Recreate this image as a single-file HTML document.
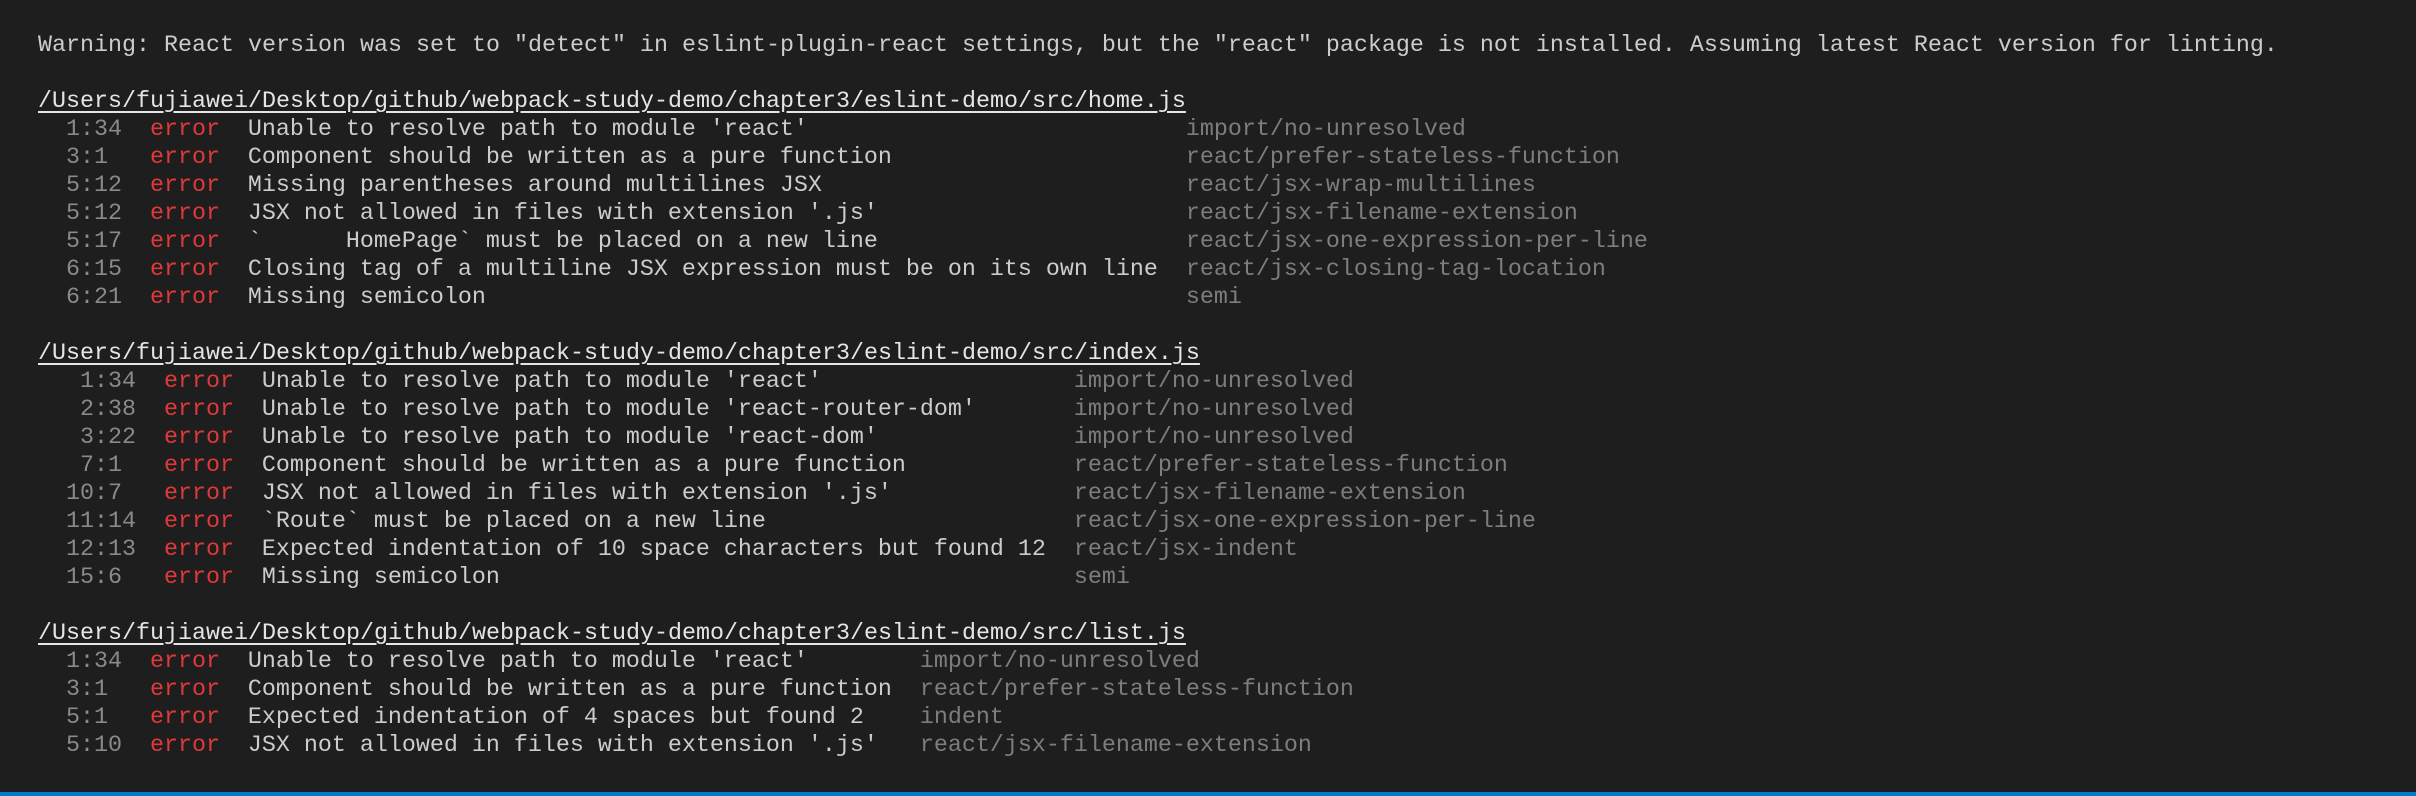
<!DOCTYPE html>
<html><head><meta charset="utf-8"><style>
html,body{margin:0;padding:0;background:#1e1e1e;}
body{width:2416px;height:796px;overflow:hidden;position:relative;}
.t{margin:0;position:absolute;left:38px;top:32px;font-family:"Liberation Mono",monospace;font-size:23.33px;line-height:28px;color:#cccccc;white-space:normal;}
.t div{height:28px;white-space:pre}
.u{text-decoration:underline;text-underline-offset:4px;color:#e5e5e5}
span{display:inline-block;white-space:pre}
.p{color:#8a8a8a;margin-left:2ch;text-align:right}
.p4{width:4ch}.p5{width:5ch}
.e{color:#e0393a;margin-left:2ch;width:5ch}
.m{margin-left:2ch}
.m65{width:65ch}.m56{width:56ch}.m46{width:46ch}
.r{color:#7d7d7d;margin-left:2ch}
.bar{position:absolute;left:0;right:0;bottom:0;height:4px;background:#007acc}
</style></head><body>
<div class="t">
<div>Warning: React version was set to "detect" in eslint-plugin-react settings, but the "react" package is not installed. Assuming latest React version for linting.</div>
<div></div>
<div class="u">/Users/fujiawei/Desktop/github/webpack-study-demo/chapter3/eslint-demo/src/home.js</div>
<div><span class="p p4">1:34</span><span class="e">error</span><span class="m m65">Unable to resolve path to module 'react'</span><span class="r">import/no-unresolved</span></div>
<div><span class="p p4" style="text-align:left">3:1</span><span class="e">error</span><span class="m m65">Component should be written as a pure function</span><span class="r">react/prefer-stateless-function</span></div>
<div><span class="p p4">5:12</span><span class="e">error</span><span class="m m65">Missing parentheses around multilines JSX</span><span class="r">react/jsx-wrap-multilines</span></div>
<div><span class="p p4">5:12</span><span class="e">error</span><span class="m m65">JSX not allowed in files with extension '.js'</span><span class="r">react/jsx-filename-extension</span></div>
<div><span class="p p4">5:17</span><span class="e">error</span><span class="m m65">`      HomePage` must be placed on a new line</span><span class="r">react/jsx-one-expression-per-line</span></div>
<div><span class="p p4">6:15</span><span class="e">error</span><span class="m m65">Closing tag of a multiline JSX expression must be on its own line</span><span class="r">react/jsx-closing-tag-location</span></div>
<div><span class="p p4">6:21</span><span class="e">error</span><span class="m m65">Missing semicolon</span><span class="r">semi</span></div>
<div></div>
<div class="u">/Users/fujiawei/Desktop/github/webpack-study-demo/chapter3/eslint-demo/src/index.js</div>
<div><span class="p p5">1:34</span><span class="e">error</span><span class="m m56">Unable to resolve path to module 'react'</span><span class="r">import/no-unresolved</span></div>
<div><span class="p p5">2:38</span><span class="e">error</span><span class="m m56">Unable to resolve path to module 'react-router-dom'</span><span class="r">import/no-unresolved</span></div>
<div><span class="p p5">3:22</span><span class="e">error</span><span class="m m56">Unable to resolve path to module 'react-dom'</span><span class="r">import/no-unresolved</span></div>
<div><span class="p p5">7:1 </span><span class="e">error</span><span class="m m56">Component should be written as a pure function</span><span class="r">react/prefer-stateless-function</span></div>
<div><span class="p p5">10:7 </span><span class="e">error</span><span class="m m56">JSX not allowed in files with extension '.js'</span><span class="r">react/jsx-filename-extension</span></div>
<div><span class="p p5">11:14</span><span class="e">error</span><span class="m m56">`Route` must be placed on a new line</span><span class="r">react/jsx-one-expression-per-line</span></div>
<div><span class="p p5">12:13</span><span class="e">error</span><span class="m m56">Expected indentation of 10 space characters but found 12</span><span class="r">react/jsx-indent</span></div>
<div><span class="p p5">15:6 </span><span class="e">error</span><span class="m m56">Missing semicolon</span><span class="r">semi</span></div>
<div></div>
<div class="u">/Users/fujiawei/Desktop/github/webpack-study-demo/chapter3/eslint-demo/src/list.js</div>
<div><span class="p p4">1:34</span><span class="e">error</span><span class="m m46">Unable to resolve path to module 'react'</span><span class="r">import/no-unresolved</span></div>
<div><span class="p p4" style="text-align:left">3:1</span><span class="e">error</span><span class="m m46">Component should be written as a pure function</span><span class="r">react/prefer-stateless-function</span></div>
<div><span class="p p4" style="text-align:left">5:1</span><span class="e">error</span><span class="m m46">Expected indentation of 4 spaces but found 2</span><span class="r">indent</span></div>
<div><span class="p p4">5:10</span><span class="e">error</span><span class="m m46">JSX not allowed in files with extension '.js'</span><span class="r">react/jsx-filename-extension</span></div>
</div>
<div class="bar"></div>
</body></html>
